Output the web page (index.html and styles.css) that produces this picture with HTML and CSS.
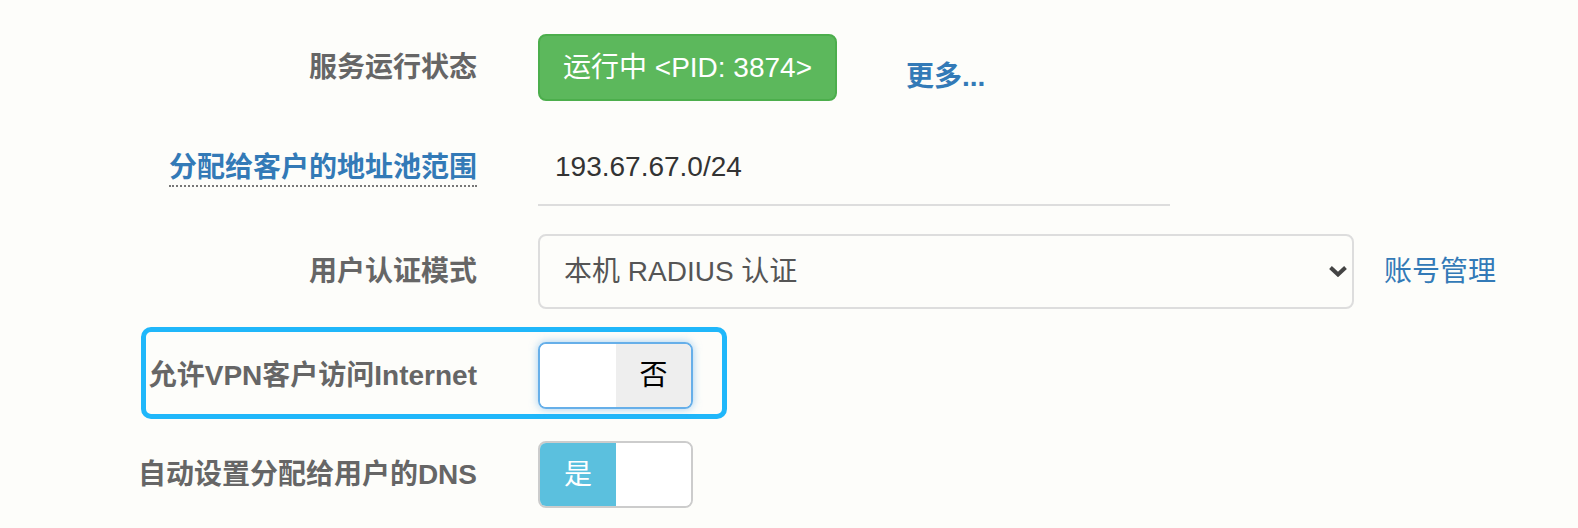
FILE: index.html
```html
<!DOCTYPE html>
<html lang="zh-CN">
<head>
<meta charset="utf-8">
<title>VPN 设置</title>
<link rel="stylesheet" href="styles.css">
</head>
<body>
<main class="form">
  <div class="row row-status">
    <div class="label">服务运行状态</div>
    <div class="ctrl">
      <span class="btn-run">运行中 &lt;PID: 3874&gt;</span>
      <a class="more" href="#">更多...</a>
    </div>
  </div>

  <div class="row row-pool">
    <div class="label"><a class="tip" href="#">分配给客户的地址池范围</a></div>
    <div class="ctrl">
      <div class="input">193.67.67.0/24</div>
    </div>
  </div>

  <div class="row row-auth">
    <div class="label">用户认证模式</div>
    <div class="ctrl">
      <div class="select">
        <span>本机 RADIUS 认证</span>
        <svg class="chev" width="18" height="11" viewBox="0 0 18 11"><path d="M1.5 1.5 L9 8.5 L16.5 1.5" fill="none" stroke="#444" stroke-width="4"/></svg>
      </div>
      <a class="acct" href="#">账号管理</a>
    </div>
  </div>

  <div class="row row-hl">
    <div class="label">允许VPN客户访问Internet</div>
    <div class="ctrl">
      <div class="switch focus">
        <span class="half left"></span>
        <span class="half right">否</span>
      </div>
    </div>
  </div>

  <div class="row row-dns">
    <div class="label">自动设置分配给用户的DNS</div>
    <div class="ctrl">
      <div class="switch on">
        <span class="half left">是</span>
        <span class="half right"></span>
      </div>
    </div>
  </div>
</main>
</body>
</html>
```

FILE: styles.css
```css
html, body {
  margin: 0;
  padding: 0;
}
body {
  background: #fdfdfa;
  font-family: "Liberation Sans", "Noto Sans CJK SC", sans-serif;
  font-size: 28px;
  line-height: 1.4;
  color: #333;
}
a {
  text-decoration: none;
  color: #337ab7;
}
.form {
  display: flex;
  flex-direction: column;
  padding-top: 34px;
}
.row {
  display: flex;
  align-items: center;
}
.label {
  flex: none;
  width: 477px;
  text-align: right;
  font-weight: 700;
  color: #666;
}
.ctrl {
  margin-left: 61px;
  display: flex;
  align-items: center;
}

/* row 1 */
.row-status { height: 67px; }
.row-status .ctrl { align-self: stretch; align-items: flex-start; }
.btn-run {
  box-sizing: border-box;
  height: 67px;
  display: flex;
  align-items: center;
  padding: 0 23px;
  background: #5cb85c;
  border: 2px solid #4cae4c;
  border-radius: 8px;
  color: #fff;
}
.more {
  margin-left: 69px;
  padding-top: 23px;
  line-height: 40px;
  font-weight: 700;
}

/* row 2 */
.row-pool { margin-top: 29px; height: 76px; }
.tip {
  display: inline-block;
  line-height: 34px;
  border-bottom: 2px dotted #777;
  margin-top: -4px;
}
.input {
  box-sizing: border-box;
  width: 632px;
  height: 76px;
  padding-left: 17px;
  display: flex;
  align-items: center;
  border-bottom: 2px solid #ddd;
  color: #333;
}

/* row 3 */
.row-auth { margin-top: 28px; height: 75px; }
.select {
  box-sizing: border-box;
  width: 816px;
  height: 75px;
  padding: 0 5px 0 24px;
  display: flex;
  align-items: center;
  justify-content: space-between;
  border: 2px solid #ddd;
  border-radius: 8px;
  color: #555;
}
.chev { display: block; }
.acct { margin-left: 30px; }

/* row 4 (highlighted) */
.row-hl {
  align-self: flex-start;
  margin-top: 18px;
  margin-left: 141px;
  padding: 10px 29px 5px 0;
  border: 5px solid #20b7fa;
  border-radius: 10px;
}
.row-hl .label { width: 331px; }

/* row 5 */
.row-dns { margin-top: 22px; }

/* switches */
.switch {
  box-sizing: border-box;
  width: 155px;
  height: 67px;
  display: flex;
  border: 2px solid #ccc;
  border-radius: 8px;
  overflow: hidden;
}
.half {
  display: flex;
  align-items: center;
  justify-content: center;
}
.half.left { flex: none; width: 76px; }
.half.right { flex: 1; }
.switch.focus {
  border-color: #66afe9;
  box-shadow: 0 0 8px rgba(102, 175, 233, 0.6);
}
.switch.focus .left { background: #fff; }
.switch.focus .right { background: #eee; color: #000; }
.switch.on .left { background: #5bc0de; color: #fff; }
.switch.on .right { background: #fff; }
```
